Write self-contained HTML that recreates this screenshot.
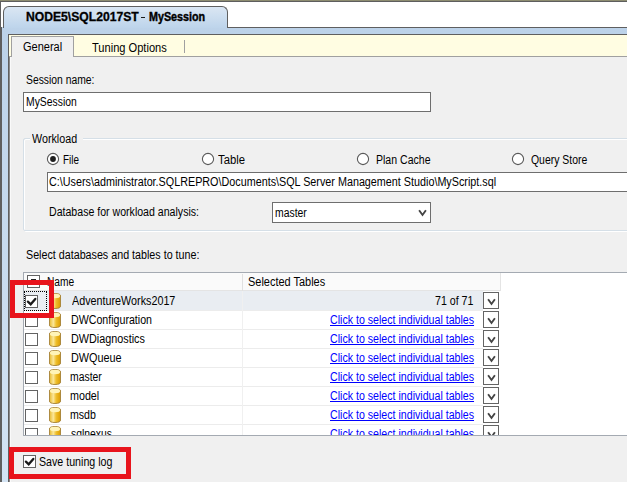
<!DOCTYPE html>
<html><head><meta charset="utf-8"><style>
html,body{margin:0;padding:0;}
body{width:628px;height:483px;position:relative;overflow:hidden;background:#fff;font-family:"Liberation Sans",sans-serif;font-size:12px;color:#000;}
div,svg{position:absolute;box-sizing:border-box;}
.t{white-space:nowrap;line-height:13px;font-size:12px;}
.cb{width:13px;height:13px;border:1px solid #636363;background:#fff;}
</style></head><body>
<svg width="0" height="0" style="left:0;top:0"><defs><linearGradient id="cg" x1="0" x2="1" y1="0" y2="0">
<stop offset="0" stop-color="#e6ba30"/><stop offset="0.35" stop-color="#fbe79a"/><stop offset="0.6" stop-color="#efbf2c"/><stop offset="1" stop-color="#dc9c00"/></linearGradient></defs></svg>

<div style="left:0;top:1px;width:628px;height:1px;background:#5e5e5e"></div>
<div style="left:0;top:0;width:1px;height:482px;background:#5f5f5f"></div>
<div style="left:1px;top:27px;width:1px;height:455px;background:#5f5f5f"></div>
<div style="left:0;top:0;width:628px;height:1px;background:#8d8c70"></div>
<div style="left:2px;top:27px;width:626px;height:455px;background:linear-gradient(#bcd2e9,#d3e3f3)"></div>
<div style="left:227px;top:27px;width:400px;height:1px;background:#5f5f5f"></div>
<div style="left:3px;top:6px;width:225px;height:22px;border:1px solid #5f5f5f;border-bottom:none;border-radius:6px 6px 0 0;background:linear-gradient(#dae6f3,#bdd4eb)"></div>
<div class="t" style="left:25.69px;top:11px;font-weight:bold;-webkit-text-stroke:0.3px #000;transform:scaleX(1.012);transform-origin:0 0">NODE5\SQL2017ST</div>
<div style="left:141px;top:17px;width:4px;height:1px;background:#1a1a1a"></div>
<div class="t" style="left:148.7px;top:11px;font-weight:bold;-webkit-text-stroke:0.4px #000;transform:scaleX(0.895);transform-origin:0 0">MySession</div>
<div style="left:8px;top:34px;width:620px;height:448px;border-left:1px solid #5f5f5f;border-top:1px solid #5f5f5f;background:#f0f0f0"></div>
<div style="left:9px;top:56px;width:1px;height:426px;background:#8a8a8a"></div>
<div style="left:10px;top:57px;width:1px;height:425px;background:#fafafa"></div>
<div style="left:9px;top:35px;width:618px;height:22px;background:#fffde2;border-bottom:1px solid #a0a0a0"></div>
<div style="left:11px;top:36px;width:63px;height:21px;background:#f0f0f0;border:1px solid #a0a0a0;border-bottom:none"></div>
<div class="t" style="left:22.6px;top:41px;transform:scaleX(0.918);transform-origin:0 0;">General</div>

<div class="t" style="left:91.5px;top:42px;transform:scaleX(0.9238);transform-origin:0 0;">Tuning Options</div>

<div style="left:184px;top:40px;width:1px;height:13px;background:#a0a0a0"></div>
<div style="left:627px;top:0;width:1px;height:483px;background:#fff"></div>
<div class="t" style="left:26.2px;top:74px;transform:scaleX(0.8626);transform-origin:0 0;">Session name:</div>

<div style="left:23px;top:92px;width:408px;height:20px;border:1px solid #6e6e6e;background:#fff"></div>
<div class="t" style="left:26.0px;top:96px;transform:scaleX(0.8647);transform-origin:0 0;">MySession</div>

<div style="left:24px;top:139px;width:610px;height:93px;border:1px solid #fff;border-radius:2px"></div>
<div style="left:23px;top:138px;width:610px;height:93px;border:1px solid #d5dfe7;border-radius:2px"></div>
<div style="left:30px;top:136px;width:53px;height:5px;background:#f0f0f0"></div>
<div class="t" style="left:32.4px;top:133px;transform:scaleX(0.8939);transform-origin:0 0;">Workload</div>

<svg width="14" height="14" viewBox="0 0 14 14" style="left:46px;top:152px"><circle cx="7" cy="7" r="5.6" fill="#fff" stroke="#5a5a5a" stroke-width="1.1"/><circle cx="7" cy="7" r="2.9" fill="#1e1e1e"/></svg>
<div class="t" style="left:63.03px;top:154px;transform:scaleX(0.8235);transform-origin:0 0;">File</div>

<svg width="14" height="14" viewBox="0 0 14 14" style="left:201px;top:152px"><circle cx="7" cy="7" r="5.6" fill="#fff" stroke="#5a5a5a" stroke-width="1.1"/></svg>
<div class="t" style="left:218.3px;top:154px;transform:scaleX(0.9408);transform-origin:0 0;">Table</div>

<svg width="14" height="14" viewBox="0 0 14 14" style="left:356px;top:152px"><circle cx="7" cy="7" r="5.6" fill="#fff" stroke="#5a5a5a" stroke-width="1.1"/></svg>
<div class="t" style="left:375.91px;top:154px;transform:scaleX(0.8784);transform-origin:0 0;">Plan Cache</div>

<svg width="14" height="14" viewBox="0 0 14 14" style="left:511px;top:152px"><circle cx="7" cy="7" r="5.6" fill="#fff" stroke="#5a5a5a" stroke-width="1.1"/></svg>
<div class="t" style="left:530.9px;top:154px;transform:scaleX(0.8698);transform-origin:0 0;">Query Store</div>

<div style="left:47px;top:172px;width:590px;height:20px;border:1px solid #6e6e6e;background:#fff"></div>
<div class="t" style="left:49.0px;top:176px;transform:scaleX(0.8982);transform-origin:0 0;">C:\Users\administrator.SQLREPRO\Documents\SQL Server Management Studio\MyScript.sql</div>

<div class="t" style="left:49.31px;top:206px;transform:scaleX(0.882);transform-origin:0 0;">Database for workload analysis:</div>

<div style="left:272px;top:202px;width:159px;height:21px;border:1px solid #6e6e6e;background:#fff"></div>
<div class="t" style="left:275.11px;top:207px;transform:scaleX(0.8657);transform-origin:0 0;">master</div>

<svg width="9" height="8" viewBox="0 0 9 8" style="left:418px;top:209px"><path d="M1.1 1.3 L4.5 6 L7.9 1.3" fill="none" stroke="#444" stroke-width="1.9"/></svg>
<div class="t" style="left:26.0px;top:249px;transform:scaleX(0.8932);transform-origin:0 0;">Select databases and tables to tune:</div>

<div style="left:23px;top:272px;width:605px;height:164px;border:1px solid #a4aab2;border-right:none;background:#fff"></div>
<div style="left:24px;top:273px;width:477px;height:18px;background:#fafafa;border-bottom:1px solid #e4e4e4"></div>
<div style="left:242px;top:274px;width:1px;height:17px;background:#e0e0e0"></div>
<div style="left:500px;top:273px;width:1px;height:18px;background:#e4e4e4"></div>
<div class="cb" style="left:27px;top:275px"></div>
<div style="left:31px;top:279px;width:5px;height:2px;background:#222"></div>
<div class="t" style="left:47.12px;top:276px;transform:scaleX(0.85);transform-origin:0 0;">Name</div>

<div class="t" style="left:247.68px;top:276px;transform:scaleX(0.9134);transform-origin:0 0;">Selected Tables</div>

<div style="left:24px;top:291px;width:459px;height:19px;background:#e9edf2"></div>
<div style="left:24px;top:310px;width:459px;height:1px;background:#ececec"></div>
<div style="left:242px;top:291px;width:1px;height:19px;background:#f0f0f0"></div>
<div class="cb" style="left:25px;top:295px"></div>
<svg width="13" height="13" viewBox="0 0 13 13" style="left:25px;top:295px"><path d="M2.9 6.6 L5.7 9.3 L10.3 3.9" fill="none" stroke="#1a1a1a" stroke-width="2.3" stroke-linecap="round"/></svg>
<svg style="left:49px;top:293px" width="12" height="16" viewBox="0 0 13 16" preserveAspectRatio="none"><path d="M0.5 3 Q0.5 0.5 6.5 0.5 Q12.5 0.5 12.5 3 L12.5 13 Q12.5 15.5 6.5 15.5 Q0.5 15.5 0.5 13 Z" fill="url(#cg)" stroke="#a8843a" stroke-width="1"/><ellipse cx="6.5" cy="3" rx="5.5" ry="2.2" fill="#fff4b8"/></svg>
<div class="t" style="left:71.7px;top:295px;transform:scaleX(0.8974);transform-origin:0 0;">AdventureWorks2017</div>

<div class="t" style="left:434.8px;top:295px;transform:scaleX(0.8854);transform-origin:0 0;">71 of 71</div>

<div style="left:483px;top:292px;width:16px;height:17px;border:1px solid #646464;background:#fff"></div>
<svg width="9" height="8" viewBox="0 0 9 8" style="left:487px;top:298px"><path d="M1.1 1.3 L4.5 6 L7.9 1.3" fill="none" stroke="#444" stroke-width="1.9"/></svg>
<div style="left:24px;top:329px;width:459px;height:1px;background:#ececec"></div>
<div style="left:242px;top:310px;width:1px;height:19px;background:#f0f0f0"></div>
<div class="cb" style="left:25px;top:314px"></div>
<svg style="left:49px;top:312px" width="12" height="16" viewBox="0 0 13 16" preserveAspectRatio="none"><path d="M0.5 3 Q0.5 0.5 6.5 0.5 Q12.5 0.5 12.5 3 L12.5 13 Q12.5 15.5 6.5 15.5 Q0.5 15.5 0.5 13 Z" fill="url(#cg)" stroke="#a8843a" stroke-width="1"/><ellipse cx="6.5" cy="3" rx="5.5" ry="2.2" fill="#fff4b8"/></svg>
<div class="t" style="left:70.5px;top:314px;transform:scaleX(0.8865);transform-origin:0 0;">DWConfiguration</div>

<div class="t" style="left:329.6px;top:314px;transform:scaleX(0.885);transform-origin:0 0;color:#0000ff;text-decoration:underline">Click to select individual tables</div>

<div style="left:483px;top:311px;width:16px;height:17px;border:1px solid #646464;background:#fff"></div>
<svg width="9" height="8" viewBox="0 0 9 8" style="left:487px;top:317px"><path d="M1.1 1.3 L4.5 6 L7.9 1.3" fill="none" stroke="#444" stroke-width="1.9"/></svg>
<div style="left:24px;top:348px;width:459px;height:1px;background:#ececec"></div>
<div style="left:242px;top:329px;width:1px;height:19px;background:#f0f0f0"></div>
<div class="cb" style="left:25px;top:333px"></div>
<svg style="left:49px;top:331px" width="12" height="16" viewBox="0 0 13 16" preserveAspectRatio="none"><path d="M0.5 3 Q0.5 0.5 6.5 0.5 Q12.5 0.5 12.5 3 L12.5 13 Q12.5 15.5 6.5 15.5 Q0.5 15.5 0.5 13 Z" fill="url(#cg)" stroke="#a8843a" stroke-width="1"/><ellipse cx="6.5" cy="3" rx="5.5" ry="2.2" fill="#fff4b8"/></svg>
<div class="t" style="left:70.79px;top:333px;transform:scaleX(0.9013);transform-origin:0 0;">DWDiagnostics</div>

<div class="t" style="left:329.6px;top:333px;transform:scaleX(0.885);transform-origin:0 0;color:#0000ff;text-decoration:underline">Click to select individual tables</div>

<div style="left:483px;top:330px;width:16px;height:17px;border:1px solid #646464;background:#fff"></div>
<svg width="9" height="8" viewBox="0 0 9 8" style="left:487px;top:336px"><path d="M1.1 1.3 L4.5 6 L7.9 1.3" fill="none" stroke="#444" stroke-width="1.9"/></svg>
<div style="left:24px;top:367px;width:459px;height:1px;background:#ececec"></div>
<div style="left:242px;top:348px;width:1px;height:19px;background:#f0f0f0"></div>
<div class="cb" style="left:25px;top:352px"></div>
<svg style="left:49px;top:350px" width="12" height="16" viewBox="0 0 13 16" preserveAspectRatio="none"><path d="M0.5 3 Q0.5 0.5 6.5 0.5 Q12.5 0.5 12.5 3 L12.5 13 Q12.5 15.5 6.5 15.5 Q0.5 15.5 0.5 13 Z" fill="url(#cg)" stroke="#a8843a" stroke-width="1"/><ellipse cx="6.5" cy="3" rx="5.5" ry="2.2" fill="#fff4b8"/></svg>
<div class="t" style="left:70.78px;top:352px;transform:scaleX(0.9037);transform-origin:0 0;">DWQueue</div>

<div class="t" style="left:329.6px;top:352px;transform:scaleX(0.885);transform-origin:0 0;color:#0000ff;text-decoration:underline">Click to select individual tables</div>

<div style="left:483px;top:349px;width:16px;height:17px;border:1px solid #646464;background:#fff"></div>
<svg width="9" height="8" viewBox="0 0 9 8" style="left:487px;top:355px"><path d="M1.1 1.3 L4.5 6 L7.9 1.3" fill="none" stroke="#444" stroke-width="1.9"/></svg>
<div style="left:24px;top:386px;width:459px;height:1px;background:#ececec"></div>
<div style="left:242px;top:367px;width:1px;height:19px;background:#f0f0f0"></div>
<div class="cb" style="left:25px;top:371px"></div>
<svg style="left:49px;top:369px" width="12" height="16" viewBox="0 0 13 16" preserveAspectRatio="none"><path d="M0.5 3 Q0.5 0.5 6.5 0.5 Q12.5 0.5 12.5 3 L12.5 13 Q12.5 15.5 6.5 15.5 Q0.5 15.5 0.5 13 Z" fill="url(#cg)" stroke="#a8843a" stroke-width="1"/><ellipse cx="6.5" cy="3" rx="5.5" ry="2.2" fill="#fff4b8"/></svg>
<div class="t" style="left:69.7px;top:371px;transform:scaleX(0.8657);transform-origin:0 0;">master</div>

<div class="t" style="left:329.6px;top:371px;transform:scaleX(0.885);transform-origin:0 0;color:#0000ff;text-decoration:underline">Click to select individual tables</div>

<div style="left:483px;top:368px;width:16px;height:17px;border:1px solid #646464;background:#fff"></div>
<svg width="9" height="8" viewBox="0 0 9 8" style="left:487px;top:374px"><path d="M1.1 1.3 L4.5 6 L7.9 1.3" fill="none" stroke="#444" stroke-width="1.9"/></svg>
<div style="left:24px;top:405px;width:459px;height:1px;background:#ececec"></div>
<div style="left:242px;top:386px;width:1px;height:19px;background:#f0f0f0"></div>
<div class="cb" style="left:25px;top:390px"></div>
<svg style="left:49px;top:388px" width="12" height="16" viewBox="0 0 13 16" preserveAspectRatio="none"><path d="M0.5 3 Q0.5 0.5 6.5 0.5 Q12.5 0.5 12.5 3 L12.5 13 Q12.5 15.5 6.5 15.5 Q0.5 15.5 0.5 13 Z" fill="url(#cg)" stroke="#a8843a" stroke-width="1"/><ellipse cx="6.5" cy="3" rx="5.5" ry="2.2" fill="#fff4b8"/></svg>
<div class="t" style="left:70.08px;top:390px;transform:scaleX(0.8933);transform-origin:0 0;">model</div>

<div class="t" style="left:329.6px;top:390px;transform:scaleX(0.885);transform-origin:0 0;color:#0000ff;text-decoration:underline">Click to select individual tables</div>

<div style="left:483px;top:387px;width:16px;height:17px;border:1px solid #646464;background:#fff"></div>
<svg width="9" height="8" viewBox="0 0 9 8" style="left:487px;top:393px"><path d="M1.1 1.3 L4.5 6 L7.9 1.3" fill="none" stroke="#444" stroke-width="1.9"/></svg>
<div style="left:24px;top:424px;width:459px;height:1px;background:#ececec"></div>
<div style="left:242px;top:405px;width:1px;height:19px;background:#f0f0f0"></div>
<div class="cb" style="left:25px;top:409px"></div>
<svg style="left:49px;top:407px" width="12" height="16" viewBox="0 0 13 16" preserveAspectRatio="none"><path d="M0.5 3 Q0.5 0.5 6.5 0.5 Q12.5 0.5 12.5 3 L12.5 13 Q12.5 15.5 6.5 15.5 Q0.5 15.5 0.5 13 Z" fill="url(#cg)" stroke="#a8843a" stroke-width="1"/><ellipse cx="6.5" cy="3" rx="5.5" ry="2.2" fill="#fff4b8"/></svg>
<div class="t" style="left:70.09px;top:409px;transform:scaleX(0.8815);transform-origin:0 0;">msdb</div>

<div class="t" style="left:329.6px;top:409px;transform:scaleX(0.885);transform-origin:0 0;color:#0000ff;text-decoration:underline">Click to select individual tables</div>

<div style="left:483px;top:406px;width:16px;height:17px;border:1px solid #646464;background:#fff"></div>
<svg width="9" height="8" viewBox="0 0 9 8" style="left:487px;top:412px"><path d="M1.1 1.3 L4.5 6 L7.9 1.3" fill="none" stroke="#444" stroke-width="1.9"/></svg>
<div style="left:24px;top:443px;width:459px;height:1px;background:#ececec"></div>
<div style="left:242px;top:424px;width:1px;height:19px;background:#f0f0f0"></div>
<div class="cb" style="left:25px;top:428px"></div>
<svg style="left:49px;top:426px" width="12" height="16" viewBox="0 0 13 16" preserveAspectRatio="none"><path d="M0.5 3 Q0.5 0.5 6.5 0.5 Q12.5 0.5 12.5 3 L12.5 13 Q12.5 15.5 6.5 15.5 Q0.5 15.5 0.5 13 Z" fill="url(#cg)" stroke="#a8843a" stroke-width="1"/><ellipse cx="6.5" cy="3" rx="5.5" ry="2.2" fill="#fff4b8"/></svg>
<div class="t" style="left:71.0px;top:428px;transform:scaleX(0.8652);transform-origin:0 0;">sqlnexus</div>

<div class="t" style="left:329.6px;top:428px;transform:scaleX(0.885);transform-origin:0 0;color:#0000ff;text-decoration:underline">Click to select individual tables</div>

<div style="left:483px;top:425px;width:16px;height:17px;border:1px solid #646464;background:#fff"></div>
<svg width="9" height="8" viewBox="0 0 9 8" style="left:487px;top:431px"><path d="M1.1 1.3 L4.5 6 L7.9 1.3" fill="none" stroke="#444" stroke-width="1.9"/></svg>
<div style="left:23px;top:435px;width:605px;height:1px;background:#a4aab2"></div>
<div style="left:11px;top:436px;width:616px;height:46px;background:#f0f0f0"></div>
<div style="left:23px;top:272px;width:1px;height:164px;background:#a4aab2"></div>
<div style="left:24px;top:291px;width:23px;height:20px;border:1px dotted #000"></div>
<div style="left:10px;top:280px;width:44px;height:38px;border:5px solid #e8141c"></div>
<div class="cb" style="left:23px;top:455px"></div>
<svg width="13" height="13" viewBox="0 0 13 13" style="left:23px;top:455px"><path d="M2.9 6.6 L5.7 9.3 L10.3 3.9" fill="none" stroke="#1a1a1a" stroke-width="2.3" stroke-linecap="round"/></svg>
<div class="t" style="left:39.4px;top:456px;transform:scaleX(0.887);transform-origin:0 0;">Save tuning log</div>

<div style="left:9px;top:447px;width:122px;height:32px;border:5px solid #e8141c"></div>
<div style="left:627px;top:0;width:1px;height:483px;background:#fff"></div>
<div style="left:0;top:482px;width:628px;height:1px;background:#fff"></div>
</body></html>
